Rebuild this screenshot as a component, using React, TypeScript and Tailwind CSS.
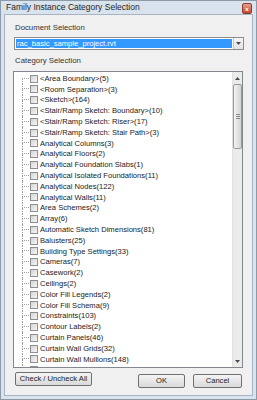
import React from "react";

const items = [
  "<Area Boundary>(5)",
  "<Room Separation>(3)",
  "<Sketch>(164)",
  "<Stair/Ramp Sketch: Boundary>(10)",
  "<Stair/Ramp Sketch: Riser>(17)",
  "<Stair/Ramp Sketch: Stair Path>(3)",
  "Analytical Columns(3)",
  "Analytical Floors(2)",
  "Analytical Foundation Slabs(1)",
  "Analytical Isolated Foundations(11)",
  "Analytical Nodes(122)",
  "Analytical Walls(11)",
  "Area Schemes(2)",
  "Array(6)",
  "Automatic Sketch Dimensions(81)",
  "Balusters(25)",
  "Building Type Settings(33)",
  "Cameras(7)",
  "Casework(2)",
  "Ceilings(2)",
  "Color Fill Legends(2)",
  "Color Fill Schema(9)",
  "Constraints(103)",
  "Contour Labels(2)",
  "Curtain Panels(46)",
  "Curtain Wall Grids(32)",
  "Curtain Wall Mullions(148)",
  "",
];

function Row({ label, first }: { label: string; first: boolean }) {
  return (
    <div className="flex items-center h-[10.8px] shrink-0">
      <div className="w-[8px] shrink-0" />
      <div className="w-[7px] h-full flex flex-col shrink-0">
        <div
          className={
            first
              ? "h-1/2 border-b border-dotted border-[#a0a0a0]"
              : "h-1/2 border-l border-b border-dotted border-[#a0a0a0]"
          }
        />
        <div className="flex-1 border-l border-dotted border-[#a0a0a0]" />
      </div>
      <div className="ml-[1px] w-[8px] h-[8px] shrink-0 border border-[#8f8f8f] bg-gradient-to-br from-[#d4d4d4] to-[#f7f7f7]" />
      {label && (
        <span className="ml-[2px] whitespace-nowrap text-[7.6px] leading-none text-[#1a1a1a]">
          {label}
        </span>
      )}
    </div>
  );
}

function Arrow({ up }: { up: boolean }) {
  return (
    <svg width="5" height="3" viewBox="0 0 5 3">
      {up ? (
        <polygon points="0,3 5,3 2.5,0" fill="#4a4a4a" />
      ) : (
        <polygon points="0,0 5,0 2.5,3" fill="#4a4a4a" />
      )}
    </svg>
  );
}

export default function App() {
  return (
    <div className="w-[257px] h-[400px] bg-[#d9e3ee] border border-[#8d9aa8] flex flex-col overflow-hidden font-['Liberation_Sans',Arial,sans-serif]">
      {/* Title bar */}
      <div className="h-[13px] shrink-0 flex items-center justify-between pl-[5px] pr-[4px]">
        <span className="text-[8.5px] leading-none text-[#1e1e1e] whitespace-nowrap">
          Family Instance Category Selection
        </span>
        <div className="w-[10px] h-[11px] mt-[2px] rounded-[2px] border border-[#8a3a2e] bg-gradient-to-b from-[#e4a08e] to-[#c5432f] flex items-center justify-center">
          <span className="text-[6px] leading-none font-bold text-white">x</span>
        </div>
      </div>

      {/* Client area */}
      <div className="flex-1 mx-[3px] mb-[3px] border border-[#a6b4c3] bg-[#f0f0f0] flex flex-col pl-[8px]">
        <div className="ml-[2px] mt-[8px] h-[10px] flex items-center text-[7.8px] leading-none text-[#333]">
          Document Selection
        </div>

        {/* Combo */}
        <div className="ml-[1px] mt-[4px] w-[230px] h-[13px] border border-[#8c8c8c] bg-white flex">
          <div className="flex-1 flex items-center p-[1px]">
            <div className="w-full h-full bg-[#3399ff] flex items-center pl-[1px]">
              <span className="text-[7.6px] leading-none text-white whitespace-nowrap">
                rac_basic_sample_project.rvt
              </span>
            </div>
          </div>
          <div className="w-[10px] border-l border-[#c8c8c8] bg-gradient-to-b from-[#f6f6f6] to-[#e2e2e2] flex items-center justify-center">
            <Arrow up={false} />
          </div>
        </div>

        <div className="ml-[2px] mt-[6px] h-[10px] flex items-center text-[7.8px] leading-none text-[#333]">
          Category Selection
        </div>

        {/* List box */}
        <div className="mt-[5px] w-[230px] h-[297px] border border-[#828790] bg-white flex">
          <div className="flex-1 overflow-hidden pt-[1.3px] flex flex-col">
            {items.map((it, i) => (
              <Row key={i} label={it} first={i === 0} />
            ))}
          </div>
          <div className="w-[10px] flex flex-col bg-[#ebebeb] border-l border-[#e0e0e0]">
            <div className="h-[12px] flex items-center justify-center">
              <Arrow up={true} />
            </div>
            <div className="flex-1 flex flex-col">
              <div className="h-[65px] rounded-[2px] border border-[#9a9a9a] bg-gradient-to-r from-[#f3f3f3] to-[#d4d4d4] flex flex-col items-center justify-center gap-[1px]">
                <div className="w-[4px] h-[1px] bg-[#8a8a8a]" />
                <div className="w-[4px] h-[1px] bg-[#8a8a8a]" />
                <div className="w-[4px] h-[1px] bg-[#8a8a8a]" />
              </div>
            </div>
            <div className="h-[12px] flex items-center justify-center">
              <Arrow up={false} />
            </div>
          </div>
        </div>

        {/* Buttons */}
        <div className="flex items-start">
          <div className="ml-[2px] mt-[4px] w-[77px] h-[14px] rounded-[2px] border border-[#707070] bg-gradient-to-b from-[#f4f4f4] to-[#dadada] flex items-center justify-center">
            <span className="text-[7.6px] leading-none text-[#222] whitespace-nowrap">
              Check / Uncheck All
            </span>
          </div>
          <div className="ml-[46px] mt-[6px] w-[47px] h-[14px] rounded-[2px] border border-[#707070] bg-gradient-to-b from-[#f4f4f4] to-[#dadada] flex items-center justify-center">
            <span className="text-[7.6px] leading-none text-[#222]">OK</span>
          </div>
          <div className="ml-[8px] mt-[6px] w-[49px] h-[14px] rounded-[2px] border border-[#707070] bg-gradient-to-b from-[#f4f4f4] to-[#dadada] flex items-center justify-center">
            <span className="text-[7.6px] leading-none text-[#222]">Cancel</span>
          </div>
        </div>
      </div>
    </div>
  );
}
